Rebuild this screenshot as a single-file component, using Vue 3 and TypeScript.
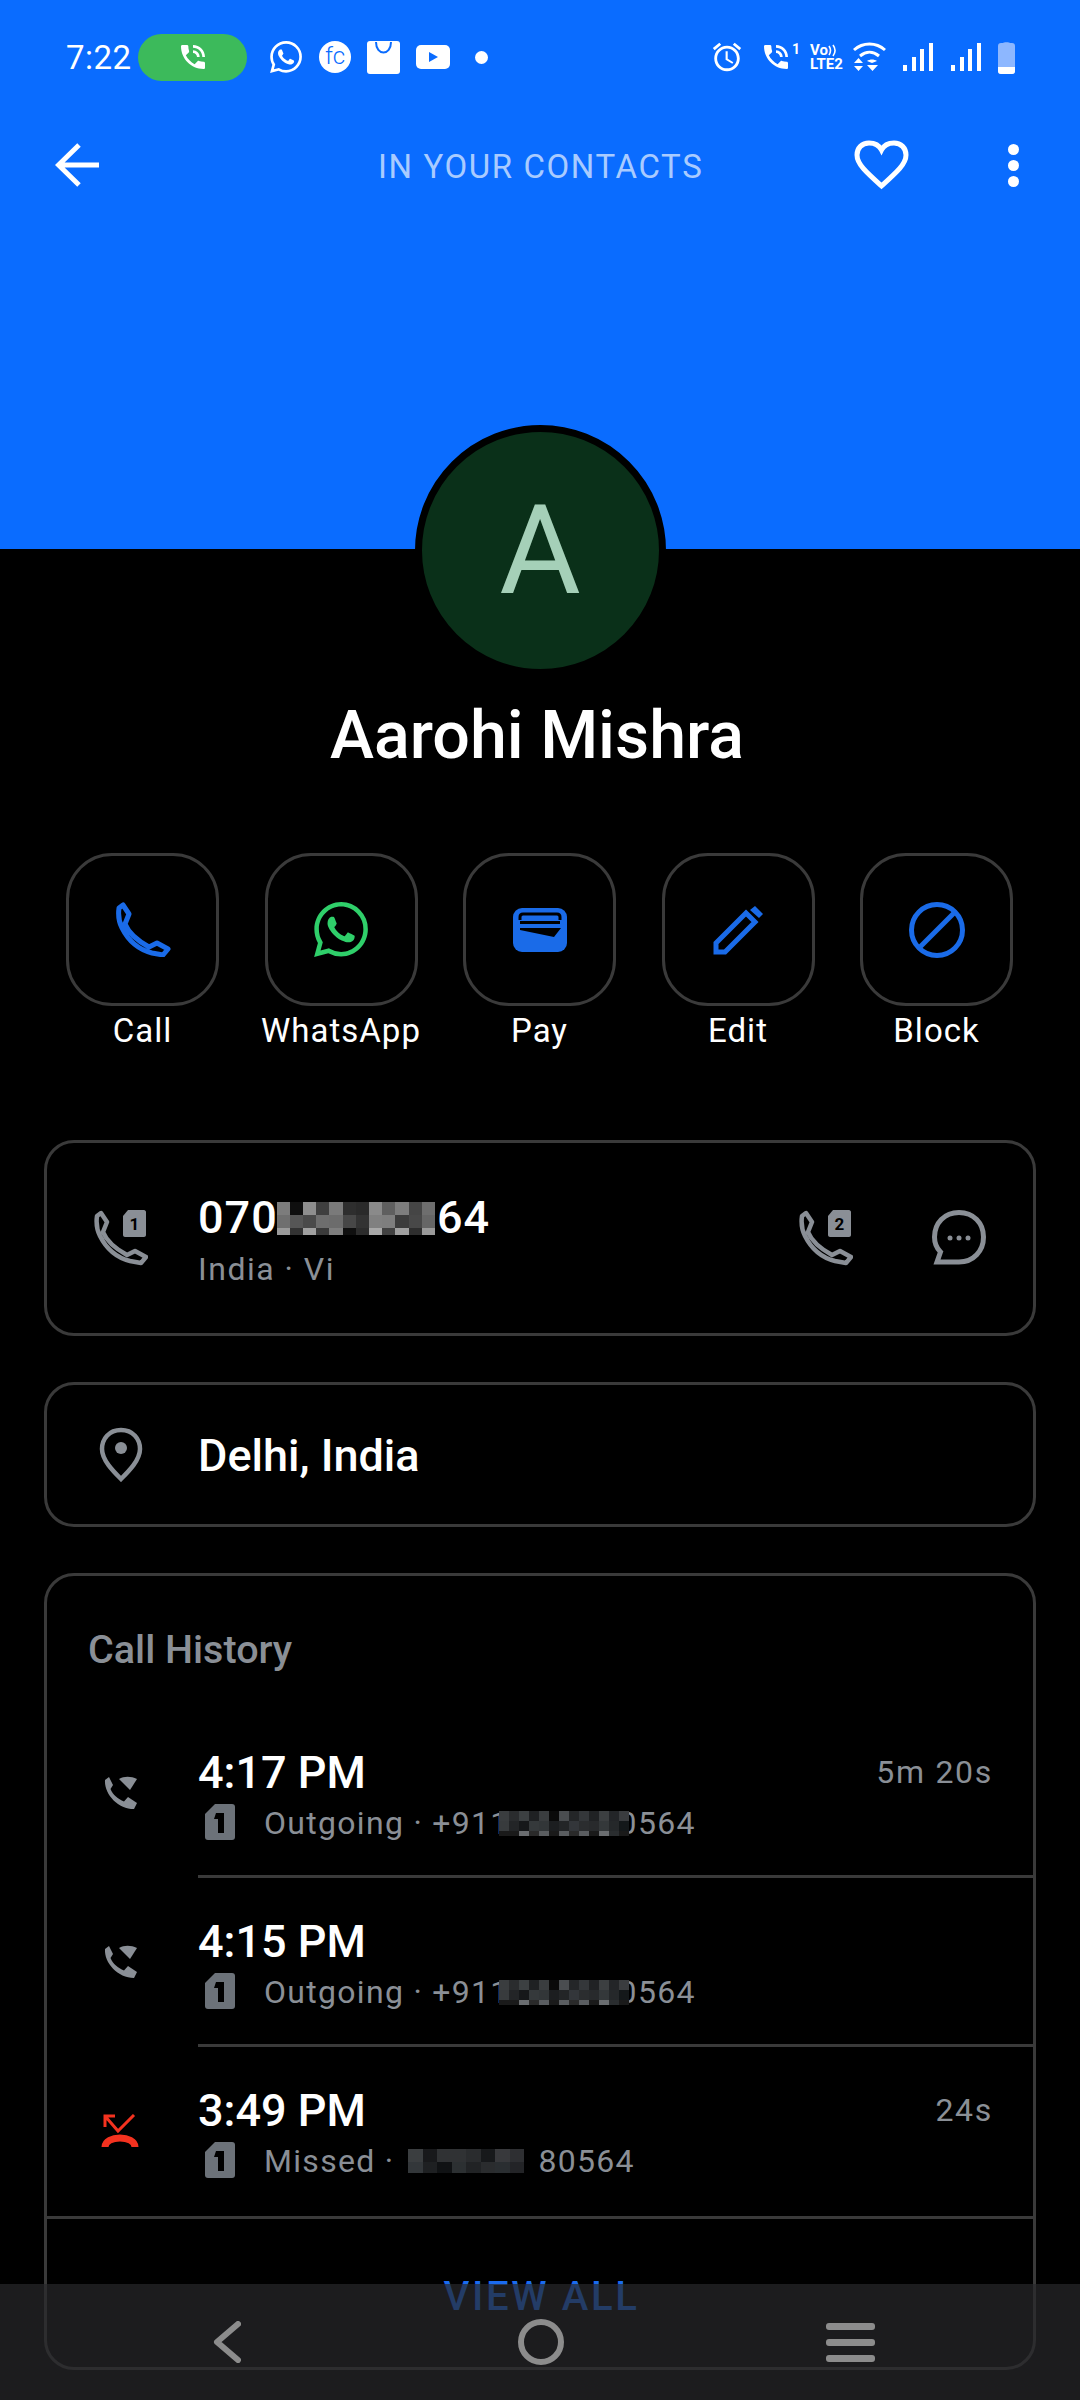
<template>
  <div class="screen">
    <header class="hero">
      <div class="status">
        <span class="status__time">7:22</span>
        <span class="status__pill">
          <svg width="32" height="32" viewBox="0 0 24 24" fill="#fff"><path :d="phoneInTalk" /></svg>
        </span>
        <svg class="st-wa" width="32" height="32" viewBox="0 0 24 24" fill="#fff"><path :d="whatsapp" /></svg>
        <span class="st-fc">fc</span>
        <svg class="st-bag" width="33" height="33" viewBox="0 0 33 33">
          <rect width="33" height="33" rx="3" fill="#fff" />
          <path d="M9 1c0 14 15 14 15 0" fill="none" stroke="#0a6cff" stroke-width="2" />
        </svg>
        <svg class="st-yt" width="34" height="24" viewBox="0 0 34 24">
          <rect width="34" height="24" rx="5" fill="#fff" />
          <path d="M13 7l9 5-9 5z" fill="#0a6cff" />
        </svg>
        <span class="st-dot"></span>

        <svg class="st-alarm" width="34" height="34" viewBox="0 0 24 24" fill="#fff"><path :d="alarm" /></svg>
        <svg class="st-call" width="32" height="32" viewBox="0 0 24 24" fill="#fff"><path :d="phoneInTalk" /></svg>
        <span class="st-one">1</span>
        <span class="st-volte">
          <span class="st-volte__top">Vo<svg width="9" height="13" viewBox="0 0 9 13" fill="none" stroke="#fff" stroke-width="1.6"><path d="M1 2c2 3 2 6 0 9M5 1c3 4 3 7 0 11" /></svg></span>
          <span class="st-volte__low">LTE2</span>
        </span>
        <svg class="st-wifi" width="33" height="30" viewBox="0 0 33 30" fill="none" stroke="#fff" stroke-width="3">
          <path d="M1 8C10 0 23 0 32 8" />
          <path d="M7 14c6-5 13-5 19 0" />
          <path d="M1 21l4.500-5 4.500 5zM1 24h9l-4.500 5zM14 19c3-2 7-2 10 0l-5 2zM14 23h11l-5.500 6z" fill="#fff" stroke="none" />
        </svg>
        <svg class="st-signal" width="30" height="28" viewBox="0 0 30 28" fill="#fff">
          <rect x="0" y="22" width="4" height="6" />
          <rect x="9" y="14" width="4" height="14" />
          <rect x="17" y="6" width="4" height="22" />
          <rect x="26" y="0" width="4" height="28" />
        </svg>
        <svg class="st-signal2" width="30" height="28" viewBox="0 0 30 28" fill="#fff">
          <rect x="0" y="22" width="4" height="6" />
          <rect x="9" y="14" width="4" height="14" />
          <rect x="17" y="6" width="4" height="22" />
          <rect x="26" y="0" width="4" height="28" />
        </svg>
        <svg class="st-batt" width="17" height="33" viewBox="0 0 17 33">
          <path d="M5 2c0-1 7-1 7 0h2c2 0 3 1 3 3v25c0 2-1 3-3 3H3c-2 0-3-1-3-3V5c0-2 1-3 3-3z" fill="#8db7ff" />
          <path d="M0 26h17v4c0 2-1 3-3 3H3c-2 0-3-1-3-3z" fill="#fff" />
        </svg>
      </div>

      <div class="toolbar">
        <svg width="44" height="44" viewBox="0 0 44 44" fill="none" stroke="#fff" stroke-width="5">
          <path d="M44 22H4M24 2L3.5 22 24 42" />
        </svg>
        <span class="toolbar__title">IN YOUR CONTACTS</span>
        <svg class="toolbar__heart" width="55" height="50" viewBox="0 0 55 50" fill="none" stroke="#fff" stroke-width="5">
          <path d="M27.5 46C12 32 3 24 3 15 3 8 8 3 15 3c5 0 10 2 12.5 7C30 5 35 3 40 3c7 0 12 5 12 12 0 9-9 17-24.500 31z" />
        </svg>
        <span class="toolbar__dots"><i></i><i></i><i></i></span>
      </div>
    </header>

    <div class="avatar">A</div>
    <h1 class="name">Aarohi Mishra</h1>

    <div class="actions">
      <div class="action">
        <span class="action__btn">
          <svg width="56" height="55" viewBox="0 0 54 55" fill="none" stroke="#1a6be8" stroke-width="5" stroke-linejoin="round">
            <path :d="phoneOutline" />
          </svg>
        </span>
        <span class="action__label">Call</span>
      </div>
      <div class="action">
        <span class="action__btn">
          <svg width="54" height="55" viewBox="0 0 24 24" fill="#2fcf6a" preserveAspectRatio="none"><path :d="whatsapp" /></svg>
        </span>
        <span class="action__label">WhatsApp</span>
      </div>
      <div class="action">
        <span class="action__btn">
          <svg width="54" height="44" viewBox="0 0 54 44">
            <rect width="54" height="44" rx="9" fill="#1a6be8" />
            <path d="M7 12V9c0-2 1-3 3-3h34c2 0 3 1 3 3v3" fill="none" stroke="#000" stroke-width="3" />
            <path d="M7 13h40v3H7zM7 20h41l-7 9-34-7z" fill="#000" />
          </svg>
        </span>
        <span class="action__label">Pay</span>
      </div>
      <div class="action">
        <span class="action__btn">
          <svg width="51" height="50" viewBox="0 0 51 50">
            <path d="M3 38L33 8l9 9-30 30H3z" fill="none" stroke="#1a6be8" stroke-width="5" />
            <path d="M37 5l5-4 8 8-4 4z" fill="#1a6be8" />
          </svg>
        </span>
        <span class="action__label">Edit</span>
      </div>
      <div class="action">
        <span class="action__btn">
          <svg width="56" height="56" viewBox="0 0 56 56" fill="none" stroke="#1a6be8" stroke-width="5">
            <circle cx="28" cy="28" r="25.500" />
            <path d="M46 10L10 46" />
          </svg>
        </span>
        <span class="action__label">Block</span>
      </div>
    </div>

    <section class="card card--phone">
      <svg class="card__icon" width="54" height="56" viewBox="0 0 54 56">
        <path :d="phoneOutline" fill="none" stroke="#8a8f96" stroke-width="4.500" stroke-linejoin="round" />
        <path d="M34 0h16c1 0 2 1 2 2v23c0 1-1 2-2 2H31c-1 0-2-1-2-2V6z" fill="#8a8f96" />
        <text x="40.500" y="20" class="badge-num">1</text>
      </svg>
      <div class="phone">
        <div class="phone__num">070<Pixels :data="mosaics.number" />64</div>
        <div class="phone__sub">India · Vi</div>
      </div>
      <svg class="card__icon card__icon--sim2" width="54" height="56" viewBox="0 0 54 56">
        <path :d="phoneOutline" fill="none" stroke="#8a8f96" stroke-width="4.500" stroke-linejoin="round" />
        <path d="M34 0h16c1 0 2 1 2 2v23c0 1-1 2-2 2H31c-1 0-2-1-2-2V6z" fill="#8a8f96" />
        <text x="40.500" y="20" class="badge-num">2</text>
      </svg>
      <svg class="card__icon card__icon--msg" width="54" height="55" viewBox="0 0 54 55" fill="none" stroke="#8a8f96" stroke-width="5">
        <path d="M27 2.500C12.500 2.500 2.500 13 2.500 27c0 7 2 11 6 15L5 52h22c14.500 0 24.500-11 24.500-25S41.500 2.500 27 2.500z" />
        <g fill="#8a8f96" stroke="none">
          <circle cx="18" cy="28" r="2.500" />
          <circle cx="27" cy="28" r="2.500" />
          <circle cx="36" cy="28" r="2.500" />
        </g>
      </svg>
    </section>

    <section class="card card--place">
      <svg width="44" height="55" viewBox="0 0 44 55" fill="none" stroke="#8a8f96" stroke-width="4.500">
        <path d="M22 3C10 3 3 12 3 22c0 11 11 22 19 30 8-8 19-19 19-30C41 12 34 3 22 3z" />
        <circle cx="22" cy="21" r="6" fill="#8a8f96" stroke="none" />
      </svg>
      <span class="place">Delhi, India</span>
    </section>

    <section class="card card--history">
      <h2 class="history__title">Call History</h2>
      <div v-for="call in calls" :key="call.time" class="call" :class="{ 'call--last': call.missed }">
        <span class="call__icon">
          <svg v-if="call.missed" width="38" height="36" viewBox="0 0 38 36" fill="none" stroke="#f4321f">
            <path d="M4 13V2h10M4 2l13 15L33 1" stroke-width="3" />
            <path d="M4 33c0-12 30-12 30 0" stroke-width="7" />
          </svg>
          <svg v-else width="33" height="33" viewBox="0 0 33 33" fill="#8a8f96">
            <path d="M5 1l4 8-2.500 4C9 19 14 23 20 25.500l4-4.500 9 6-3 6C14 33 0 18 1 4z" />
            <path d="M15 3c5-3 12-3 18 0l-7 11z" />
          </svg>
        </span>
        <div class="call__body">
          <div class="call__top">
            <span class="call__time">{{ call.time }}</span>
            <span class="call__dur">{{ call.duration }}</span>
          </div>
          <div class="call__sub">
            <svg class="call__sim" width="30" height="36" viewBox="0 0 30 36">
              <path d="M10 0h17c2 0 3 1 3 3v30c0 2-1 3-3 3H3c-2 0-3-1-3-3V10z" fill="#6c7279" />
              <path d="M11 9h8v20h-6V15h-4z" fill="#000" />
            </svg>
            <span>{{ call.prefix }}</span>
            <Pixels :data="call.missed ? mosaics.missed : mosaics.outgoing" />
            <span>{{ call.suffix }}</span>
          </div>
        </div>
      </div>
      <div class="history__more">VIEW ALL</div>
    </section>

    <nav class="navbar">
      <svg class="navbar__back" width="28" height="42" viewBox="0 0 28 42" fill="none" stroke="#8c8c8c" stroke-width="6" stroke-linecap="round" stroke-linejoin="round">
        <path d="M25 3L4 21l21 18" />
      </svg>
      <span class="navbar__home"></span>
      <span class="navbar__menu"><i></i><i></i><i></i></span>
    </nav>
  </div>
</template>

<script setup lang="ts">
import { defineComponent, h } from 'vue'

interface MosaicRow {
  height: number
  colors: string[]
}

interface Mosaic {
  cell: number
  rows: MosaicRow[]
}

interface Call {
  time: string
  duration: string
  prefix: string
  suffix: string
  missed?: boolean
}

// blurred digits in the screenshot, rebuilt as blocks
const Pixels = defineComponent({
  props: { data: { type: Object as () => Mosaic, required: true } },
  setup(props) {
    return () =>
      h(
        'span',
        { class: 'pixels' },
        props.data.rows.map((row) =>
          h(
            'span',
            { class: 'pixels__row', style: { height: `${row.height}px` } },
            row.colors.map((c) =>
              h('i', { class: 'pixels__cell', style: { width: `${props.data.cell}px`, background: `#${c}` } })
            )
          )
        )
      )
  }
})

const mosaics: Record<string, Mosaic> = {
  number: {
    cell: 13.2,
    rows: [
      { height: 13, colors: '7c7c7c 0f0f0f 8e8e8e 3f3f3f 7a7a7a 2e2e2e 2a2a2a 8a8a8a 5f5f5f 7d7d7d 454545 6e6e6e'.split(' ') },
      { height: 13, colors: '6f6f6f 565656 4a4a4a 6e6e6e 6c6c6c 474747 333333 808080 7e7e7e 3c3c3c 484848 666666'.split(' ') },
      { height: 7, colors: '9a9a9a 333333 a0a0a0 3a3a3a 7e7e7e 0f0f0f 2c2c2c a8a8a8 414141 a0a0a0 2e2e2e 9a9a9a'.split(' ') }
    ]
  },
  outgoing: {
    cell: 10,
    rows: [
      { height: 10, colors: '3a3d3f 2a2c2e 3c4042 1f2123 3a3d3f 0a0a0a 4a4d50 242628 34373a 202224 3c3f41 232528 3a3c3f'.split(' ') },
      { height: 10, colors: '383b3d 232527 16181a 35393b 323638 1c1e20 232527 33363a 2b2d2f 282a2c 34383a 25282a 14181a'.split(' ') },
      { height: 5, colors: '1a1a1a 1a1a1a 6a6d70 2a2a2a 5a5d60 1a1a1a 5a5d60 2a2a2a 5a5d60 1a1a1a 6a6d70 2a2d2f 1a1a1a'.split(' ') }
    ]
  },
  missed: {
    cell: 14.5,
    rows: [
      { height: 13, colors: '3b3e40 18191b 303234 303234 2a2c2e 17191b 38393c 2e2f32'.split(' ') },
      { height: 11, colors: '33373a 1e2022 101214 2c3032 212325 2a2c2e 2a2e31 232427'.split(' ') }
    ]
  }
}

const calls: Call[] = [
  { time: '4:17 PM', duration: '5m 20s', prefix: 'Outgoing · +911', suffix: '0564' },
  { time: '4:15 PM', duration: '', prefix: 'Outgoing · +911', suffix: '0564' },
  { time: '3:49 PM', duration: '24s', prefix: 'Missed ·', suffix: '80564', missed: true }
]

const phoneOutline =
  'M7 3L3 6C2 13 3 20 6 26c5 10 14 21 30 25l11 2 5-6-11-6-8 4C22 39 13 32 9 22l4-10z'
const phoneInTalk =
  'M20 15.5c-1.25 0-2.45-.2-3.57-.57-.35-.11-.74-.03-1.02.24l-2.2 2.2c-2.83-1.44-5.15-3.75-6.59-6.59l2.2-2.21c.28-.26.36-.65.25-1C8.7 6.45 8.5 5.25 8.5 4c0-.55-.45-1-1-1H4c-.55 0-1 .45-1 1 0 9.39 7.61 17 17 17 .55 0 1-.45 1-1v-3.500c0-.55-.45-1-1-1zM19 12h2c0-4.970-4.030-9-9-9v2c3.870 0 7 3.130 7 7zm-4 0h2c0-2.760-2.240-5-5-5v2c1.660 0 3 1.340 3 3z'
const alarm =
  'M22 5.720l-4.600-3.860-1.290 1.530 4.600 3.860L22 5.720zM7.880 3.390L6.600 1.860 2 5.710l1.290 1.530 4.590-3.850zM12.500 8H11v6l4.750 2.850.75-1.230-4-2.370V8zM12 4c-4.970 0-9 4.030-9 9s4.030 9 9 9 9-4.030 9-9-4.030-9-9-9zm0 16c-3.870 0-7-3.130-7-7s3.130-7 7-7 7 3.130 7 7-3.130 7-7 7z'
const whatsapp =
  'M17.472 14.382c-.297-.149-1.758-.867-2.030-.967-.273-.099-.471-.148-.67.15-.197.297-.767.966-.94 1.164-.173.199-.347.223-.644.075-.297-.15-1.255-.463-2.390-1.475-.883-.788-1.480-1.761-1.653-2.059-.173-.297-.018-.458.13-.606.134-.133.298-.347.446-.52.149-.174.198-.298.298-.497.099-.198.05-.371-.025-.52-.075-.149-.669-1.612-.916-2.207-.242-.579-.487-.5-.669-.51-.173-.008-.371-.01-.57-.01-.198 0-.52.074-.792.372-.272.297-1.040 1.016-1.040 2.479 0 1.462 1.065 2.875 1.213 3.074.149.198 2.096 3.200 5.077 4.487.709.306 1.262.489 1.694.625.712.227 1.360.195 1.871.118.571-.085 1.758-.719 2.006-1.413.248-.694.248-1.289.173-1.413-.074-.124-.272-.198-.57-.347m-5.421 7.403h-.004a9.870 9.870 0 01-5.031-1.378l-.361-.214-3.741.982.998-3.648-.235-.374a9.860 9.860 0 01-1.510-5.260c.001-5.450 4.436-9.884 9.888-9.884 2.640 0 5.122 1.030 6.988 2.898a9.825 9.825 0 012.893 6.994c-.003 5.450-4.437 9.884-9.885 9.884m8.413-18.297A11.815 11.815 0 0012.050 0C5.495 0 .16 5.335.157 11.892c0 2.096.547 4.142 1.588 5.945L.057 24l6.305-1.654a11.882 11.882 0 005.683 1.448h.005c6.554 0 11.890-5.335 11.893-11.893a11.821 11.821 0 00-3.480-8.413z'
</script>

<style>
body {
  background: #000;
}

.pixels {
  position: relative;
  z-index: 1;
  display: inline-flex;
  flex-direction: column;
  vertical-align: middle;
}

.pixels__row {
  display: flex;
}

.pixels__cell {
  display: block;
  height: 100%;
}

.phone__num .pixels {
  margin: 0 2px 0 -1px;
}

.call__sub .pixels {
  margin: 0 -10px 0 -11px;
}

.call--last .call__sub .pixels {
  margin: 0 14px 0 14px;
}
</style>

<style scoped>
.screen {
  position: relative;
  width: 1080px;
  height: 2400px;
  overflow: hidden;
  background: #000;
  color: #fff;
  font-family: Roboto, 'Liberation Sans', sans-serif;
}

.hero {
  height: 549px;
  background: #0a6cff;
}

.status {
  display: flex;
  align-items: center;
  height: 114px;
  padding-left: 66px;
}

.status__time {
  width: 72px;
  font-size: 33px;
  letter-spacing: 0.5px;
}

.status__pill {
  display: flex;
  align-items: center;
  justify-content: center;
  width: 109px;
  height: 47px;
  border-radius: 24px;
  background: #3cba5b;
}

.st-wa {
  margin-left: 23px;
}

.st-fc {
  width: 32px;
  height: 32px;
  margin-left: 17px;
  border-radius: 50%;
  background: #fff;
  color: #0a6cff;
  font-size: 24px;
  font-weight: 300;
  line-height: 31px;
  text-align: center;
}

.st-bag {
  margin-left: 16px;
}

.st-yt {
  margin-left: 16px;
}

.st-dot {
  width: 13px;
  height: 13px;
  margin-left: 25px;
  border-radius: 50%;
  background: #fff;
}

.st-alarm {
  margin-left: 222px;
}

.st-call {
  margin-left: 16px;
}

.st-one {
  align-self: flex-start;
  width: 9px;
  margin-top: 41px;
  font-size: 14px;
  font-weight: 700;
}

.st-volte {
  display: flex;
  flex-direction: column;
  width: 38px;
  margin-left: 9px;
  font-size: 15px;
  font-weight: 700;
  line-height: 14px;
}

.st-volte__top {
  display: flex;
  align-items: center;
}

.st-wifi {
  margin-left: 5px;
}

.st-signal {
  margin-left: 17px;
}

.st-signal2 {
  margin-left: 18px;
}

.st-batt {
  margin-left: 17px;
}

.toolbar {
  display: flex;
  align-items: center;
  height: 102px;
  padding-left: 55px;
}

.toolbar__title {
  width: 324px;
  margin-left: 279px;
  padding-top: 2px;
  color: #a9cbff;
  font-size: 33px;
  letter-spacing: 1.6px;
  white-space: nowrap;
}

.toolbar__heart {
  margin-left: 152px;
}

.toolbar__dots {
  display: flex;
  flex-direction: column;
  gap: 5px;
  margin-left: 99px;
}

.toolbar__dots i {
  width: 11px;
  height: 11px;
  border-radius: 50%;
  background: #fff;
}

.avatar {
  position: relative;
  box-sizing: border-box;
  width: 251px;
  height: 251px;
  margin: -124px auto 0;
  border: 7px solid #000;
  border-radius: 50%;
  background: #0a3019;
  color: #a5d0b8;
  font-size: 125px;
  font-weight: 400;
  line-height: 237px;
  text-align: center;
}

.name {
  margin: 19px 0 0;
  padding-right: 6px;
  font-size: 66.3px;
  font-weight: 500;
  line-height: 80px;
  text-align: center;
}

.actions {
  display: flex;
  gap: 45.5px;
  margin-top: 78px;
  padding-left: 66px;
}

.action {
  display: flex;
  flex-direction: column;
  align-items: center;
  width: 153px;
}

.action__btn {
  display: flex;
  align-items: center;
  justify-content: center;
  box-sizing: border-box;
  width: 153px;
  height: 153px;
  border: 3px solid #3a3a3a;
  border-radius: 46px;
}

.action__label {
  margin-top: 5px;
  font-size: 33px;
  letter-spacing: 1px;
  line-height: 40px;
  white-space: nowrap;
}

.card {
  box-sizing: border-box;
  margin: 0 44px;
  border: 3px solid #3a3a3a;
  border-radius: 30px;
}

.card--phone {
  display: flex;
  height: 196px;
  margin-top: 89px;
  padding: 49px 0 0 47px;
}

.card__icon {
  margin-top: 18px;
}

.card__icon--sim2 {
  margin-left: auto;
}

.card__icon--msg {
  margin-left: 79px;
  margin-right: 47px;
}

.badge-num {
  fill: #000;
  font-size: 17px;
  font-weight: 700;
  text-anchor: middle;
}

.phone {
  margin-left: 50px;
}

.phone__num {
  display: flex;
  align-items: center;
  font-size: 45px;
  font-weight: 500;
  letter-spacing: 1px;
  line-height: 52px;
}

.phone__sub {
  margin-top: 5px;
  color: #8a8f96;
  font-size: 32px;
  letter-spacing: 1.5px;
  line-height: 40px;
}

.card--place {
  display: flex;
  align-items: center;
  height: 145px;
  margin-top: 46px;
  padding-left: 52px;
}

.place {
  margin-left: 55px;
  padding-top: 2px;
  font-size: 45px;
  font-weight: 500;
  line-height: 52px;
}

.card--history {
  height: 797px;
  margin-top: 46px;
}

.history__title {
  height: 133px;
  margin: 0;
  padding: 52px 0 0 41px;
  box-sizing: border-box;
  color: #8a8f96;
  font-size: 39.5px;
  font-weight: 500;
  line-height: 44px;
}

.call {
  display: flex;
  height: 169px;
}

.call__icon {
  flex: none;
  width: 151px;
  padding: 67px 0 0 57px;
  box-sizing: border-box;
}

.call--last .call__icon {
  padding-left: 54px;
}

.call__body {
  flex: 1;
  padding: 37px 0 0;
  border-bottom: 3px solid #3a3a3a;
}

.call--last .call__body {
  border-bottom: 0;
}

.call__top {
  display: flex;
  align-items: center;
  justify-content: space-between;
  height: 52px;
  padding-right: 40px;
}

.call__time {
  font-size: 45px;
  font-weight: 500;
}

.call__dur {
  color: #8a8f96;
  font-size: 32px;
  letter-spacing: 1.7px;
}

.call__sub {
  display: flex;
  align-items: center;
  height: 46px;
  margin-top: 2px;
  color: #8a8f96;
  font-size: 32px;
  letter-spacing: 1.3px;
}

.call__sim {
  margin: -2px 29px 0 7px;
}

.history__more {
  height: 100px;
  padding: 56px 0 0 3px;
  box-sizing: border-box;
  border-top: 3px solid #3a3a3a;
  color: #1a6bf0;
  font-size: 40px;
  font-weight: 500;
  letter-spacing: 2.7px;
  line-height: 44px;
  text-align: center;
}

.navbar {
  position: absolute;
  left: 0;
  right: 0;
  bottom: 0;
  display: flex;
  align-items: center;
  height: 116px;
  padding-left: 213px;
  background: rgba(40, 40, 43, 0.7);
}

.navbar__home {
  box-sizing: border-box;
  width: 46px;
  height: 46px;
  margin-left: 277px;
  border: 6px solid #8c8c8c;
  border-radius: 50%;
}

.navbar__menu {
  display: flex;
  flex-direction: column;
  gap: 9px;
  margin-left: 262px;
}

.navbar__menu i {
  width: 49px;
  height: 7px;
  border-radius: 3px;
  background: #8c8c8c;
}
</style>
